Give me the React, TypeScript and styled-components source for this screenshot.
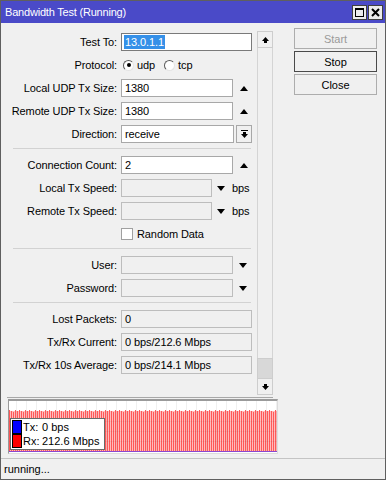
import styled, { createGlobalStyle } from "styled-components"

const GlobalStyle = createGlobalStyle`
  html, body {
    margin: 0;
    padding: 0;
    background: #f0f0f0;
  }
  body {
    font-family: "Liberation Sans", Arial, sans-serif;
    font-size: 11px;
    color: #000;
  }
`

type FieldState = "edit" | "focus" | "off"

const bars = Array.from({ length: 134 }, (_, i) => 9 + ((i * 37) % 5) * 0.45)

export default function App() {
  return (
    <>
      <GlobalStyle />
      <Window>
        <TitleBar>
          <TitleText>Bandwidth Test (Running)</TitleText>
          <TitleButton>
            <MaxIcon />
          </TitleButton>
          <TitleButton>
            <svg width="9" height="9" viewBox="0 0 9 9">
              <path d="M1 1 L8 8 M8 1 L1 8" stroke="#000" strokeWidth="2" />
            </svg>
          </TitleButton>
        </TitleBar>

        <Main>
          <LeftColumn>
            <FormPanel>
              <FormContent>
                <Section>
                  <Row>
                    <Label>Test To:</Label>
                    <Field $width={131} $state="focus">
                      <Selected>13.0.1.1</Selected>
                    </Field>
                  </Row>
                  <Row>
                    <Label>Protocol:</Label>
                    <Radio $on />
                    <Choice>udp</Choice>
                    <Radio />
                    <Choice>tcp</Choice>
                  </Row>
                  <Row>
                    <Label>Local UDP Tx Size:</Label>
                    <Field $width={112}>1380</Field>
                    <Caret $up $gap={7} />
                  </Row>
                  <Row>
                    <Label>Remote UDP Tx Size:</Label>
                    <Field $width={112}>1380</Field>
                    <Caret $up $gap={7} />
                  </Row>
                  <Row>
                    <Label>Direction:</Label>
                    <Field $width={113}>receive</Field>
                    <DropBox>
                      <svg width="7" height="8" viewBox="0 0 7 8">
                        <rect x="0" y="0" width="7" height="1" fill="#000" />
                        <rect x="2" y="2" width="3" height="2" fill="#000" />
                        <path d="M0 4 H7 L3.5 8 Z" fill="#000" />
                      </svg>
                    </DropBox>
                  </Row>
                </Section>

                <Separator />

                <Section>
                  <Row>
                    <Label>Connection Count:</Label>
                    <Field $width={112}>2</Field>
                    <Caret $up $gap={7} />
                  </Row>
                  <Row>
                    <Label>Local Tx Speed:</Label>
                    <Field $width={91} $state="off" />
                    <Caret $gap={5} />
                    <Unit>bps</Unit>
                  </Row>
                  <Row>
                    <Label>Remote Tx Speed:</Label>
                    <Field $width={91} $state="off" />
                    <Caret $gap={5} />
                    <Unit>bps</Unit>
                  </Row>
                  <Row>
                    <Label />
                    <CheckBox />
                    <Choice>Random Data</Choice>
                  </Row>
                </Section>

                <Separator />

                <Section>
                  <Row>
                    <Label>User:</Label>
                    <Field $width={112} $state="off" />
                    <Caret $gap={6} />
                  </Row>
                  <Row>
                    <Label>Password:</Label>
                    <Field $width={112} $state="off" />
                    <Caret $gap={6} />
                  </Row>
                </Section>

                <Separator />

                <Section>
                  <Row>
                    <Label>Lost Packets:</Label>
                    <Field $width={131} $state="off">0</Field>
                  </Row>
                  <Row>
                    <Label>Tx/Rx Current:</Label>
                    <Field $width={131} $state="off">0 bps/212.6 Mbps</Field>
                  </Row>
                  <Row>
                    <Label>Tx/Rx 10s Average:</Label>
                    <Field $width={131} $state="off">0 bps/214.1 Mbps</Field>
                  </Row>
                </Section>
              </FormContent>

              <ScrollBar>
                <ScrollButton>
                  <svg width="7" height="6" viewBox="0 0 7 6">
                    <path d="M3.5 0 L7 4 H5 V6 H2 V4 H0 Z" fill="#000" />
                  </svg>
                </ScrollButton>
                <Track>
                  <Thumb />
                </Track>
                <ScrollButton>
                  <svg width="7" height="6" viewBox="0 0 7 6">
                    <path d="M2 0 H5 V2 H7 L3.5 6 L0 2 H2 Z" fill="#000" />
                  </svg>
                </ScrollButton>
              </ScrollBar>
            </FormPanel>

            <GraphBox>
              <svg width="268" height="52" viewBox="0 0 268 52" shapeRendering="crispEdges">
                <rect x="0" y="0" width="268" height="52" fill="#fff" />
                <rect x="0" y="10" width="268" height="41" fill="#ffbcbc" />
                {bars.map((top, i) => (
                  <rect key={i} x={i * 2} y={top} width="1" height={51 - top} fill="#ff5858" />
                ))}
                {Array.from({ length: 27 }, (_, k) => (
                  <rect key={"v" + k} x={7 + k * 10} y="0" width="1" height="51" fill="rgba(0,0,0,0.06)" />
                ))}
                {[20, 30, 40].map((y) => (
                  <rect key={"h" + y} x="0" y={y} width="268" height="1" fill="rgba(0,0,0,0.04)" />
                ))}
                <rect x="0" y="50" width="268" height="1" fill="#8a48d0" />
              </svg>
              <Legend>
                <LegendRow>
                  <Swatch $color="#0000ff" />
                  <LegendKey>Tx:</LegendKey>
                  <span>0 bps</span>
                </LegendRow>
                <LegendRow>
                  <Swatch $color="#ff0000" />
                  <LegendKey>Rx:</LegendKey>
                  <span>212.6 Mbps</span>
                </LegendRow>
              </Legend>
            </GraphBox>
          </LeftColumn>

          <ButtonColumn>
            <Button $disabled>Start</Button>
            <Button $focused>Stop</Button>
            <Button>Close</Button>
          </ButtonColumn>
        </Main>

        <StatusBar>running...</StatusBar>
      </Window>
    </>
  )
}

const Window = styled.div`
  width: 386px;
  height: 480px;
  box-sizing: border-box;
  border: 1px solid #5f5f5f;
  display: flex;
  flex-direction: column;
  background: #f0f0f0;
`

const TitleBar = styled.div`
  height: 22px;
  background: #4a4ac8;
  color: #fff;
  display: flex;
  align-items: center;
  gap: 1px;
  padding: 0 2px 0 4px;
`

const TitleText = styled.span`
  flex: 1;
  letter-spacing: -0.2px;
`

const TitleButton = styled.span`
  box-sizing: border-box;
  width: 15px;
  height: 15px;
  border: 1px solid #404040;
  background: #ececec;
  display: flex;
  align-items: center;
  justify-content: center;
`

const MaxIcon = styled.span`
  box-sizing: border-box;
  width: 9px;
  height: 9px;
  border: 1px solid #000;
  border-top-width: 2px;
`

const Main = styled.div`
  flex: 1;
  display: flex;
  padding: 5px 0 0 6px;
`

const LeftColumn = styled.div`
  width: 271px;
  margin-top: 3px;
  display: flex;
  flex-direction: column;
`

const FormPanel = styled.div`
  width: 266px;
  height: 367px;
  box-sizing: border-box;
  display: flex;
  align-items: flex-start;
  border-bottom: 1px solid #a8a8a8;
`

const FormContent = styled.div`
  width: 250px;
  padding-top: 2px;
`

const Section = styled.div`
  display: flex;
  flex-direction: column;
  gap: 5px;
`

const Separator = styled.div`
  margin: 5px 0 7px 6px;
  width: 238px;
  height: 1px;
  background: #d2d2d2;
`

const Row = styled.div`
  display: flex;
  align-items: center;
  height: 18px;
  letter-spacing: -0.1px;
`

const Label = styled.span`
  width: 110px;
  margin-right: 4px;
  text-align: right;
  white-space: nowrap;
`

const Field = styled.div<{ $width: number; $state?: FieldState }>`
  box-sizing: border-box;
  width: ${(p) => p.$width}px;
  height: 18px;
  padding: 0 3px;
  display: flex;
  align-items: center;
  white-space: nowrap;
  border: 1px solid
    ${(p) => (p.$state === "focus" ? "#7a7a7a" : p.$state === "off" ? "#bdbdbd" : "#a8a8a8")};
  background: ${(p) => (p.$state === "off" ? "#f0f0f0" : "#fff")};
`

const Selected = styled.span`
  margin-left: -1px;
  padding: 0 1px;
  line-height: 14px;
  background: #3590e8;
  color: #fff;
`

const Caret = styled.span<{ $up?: boolean; $gap: number }>`
  margin-left: ${(p) => p.$gap}px;
  width: 0;
  height: 0;
  border-left: 4px solid transparent;
  border-right: 4px solid transparent;
  ${(p) => (p.$up ? "border-bottom: 5px solid #000;" : "border-top: 5px solid #000;")}
`

const Unit = styled.span`
  margin-left: 7px;
`

const DropBox = styled.span`
  box-sizing: border-box;
  width: 16px;
  height: 18px;
  margin-left: 2px;
  border: 1px solid #a8a8a8;
  display: flex;
  align-items: center;
  justify-content: center;
`

const Radio = styled.span<{ $on?: boolean }>`
  box-sizing: border-box;
  width: 11px;
  height: 11px;
  margin-left: 2px;
  border-radius: 50%;
  border: 1px solid;
  border-color: #5a5a5a #e4e4e4 #e4e4e4 #5a5a5a;
  background: #fff;
  display: flex;
  align-items: center;
  justify-content: center;

  &::after {
    content: "";
    width: 4px;
    height: 4px;
    border-radius: 50%;
    background: #000;
    display: ${(p) => (p.$on ? "block" : "none")};
  }
`

const Choice = styled.span`
  margin-left: 3px;
  margin-right: 7px;
`

const CheckBox = styled.span`
  box-sizing: border-box;
  width: 12px;
  height: 12px;
  border: 1px solid #a0a0a0;
  background: #fff;
  margin-right: 1px;
`

const ScrollBar = styled.div`
  width: 16px;
  height: 364px;
  box-sizing: border-box;
  border-left: 1px solid #d4d4d4;
  border-right: 1px solid #d4d4d4;
  display: flex;
  flex-direction: column;
`

const ScrollButton = styled.div`
  height: 17px;
  margin: 0 -1px;
  box-sizing: border-box;
  border: 1px solid #cdcdcd;
  display: flex;
  align-items: center;
  justify-content: center;
`

const Track = styled.div`
  flex: 1;
  display: flex;
  flex-direction: column;
  justify-content: flex-end;
`

const Thumb = styled.div`
  height: 19px;
  margin: 0 -1px;
  background: #d8d8d8;
  border: 1px solid #cdcdcd;
  border-bottom: none;
`

const GraphBox = styled.div`
  position: relative;
  width: 270px;
  height: 55px;
  box-sizing: border-box;
  margin: 1px 0 0 1px;
  border-top: 2px solid #9a9a9a;
  border-left: 1px solid #9a9a9a;
  border-right: 1px solid #dcdcdc;
  border-bottom: 1px solid #dcdcdc;

  svg {
    display: block;
  }
`

const Legend = styled.div`
  position: absolute;
  left: 1px;
  top: 17px;
  width: 95px;
  height: 32px;
  box-sizing: border-box;
  padding: 1px;
  border: 1px solid #6a6a6a;
  background: #fff;
  display: flex;
  flex-direction: column;
`

const LegendRow = styled.div`
  display: flex;
  align-items: center;
  height: 14px;
`

const Swatch = styled.span<{ $color: string }>`
  box-sizing: border-box;
  flex-shrink: 0;
  width: 10px;
  height: 14px;
  border: 1px solid #000;
  background: ${(p) => p.$color};
  margin-right: 1px;
`

const LegendKey = styled.span`
  flex-shrink: 0;
  width: 19px;
`

const ButtonColumn = styled.div`
  width: 83px;
  margin-left: 16px;
  display: flex;
  flex-direction: column;
  gap: 2px;
`

const Button = styled.div<{ $disabled?: boolean; $focused?: boolean }>`
  height: 21px;
  box-sizing: border-box;
  display: flex;
  align-items: center;
  justify-content: center;
  background: #f0f0f0;
  border: 1px solid ${(p) => (p.$focused ? "#4a4a4a" : "#adadad")};
  color: ${(p) => (p.$disabled ? "#9a9a9a" : "#000")};
`

const StatusBar = styled.div`
  height: 20px;
  border-top: 1px solid #c4c4c4;
  display: flex;
  align-items: center;
  padding-left: 3px;
`
